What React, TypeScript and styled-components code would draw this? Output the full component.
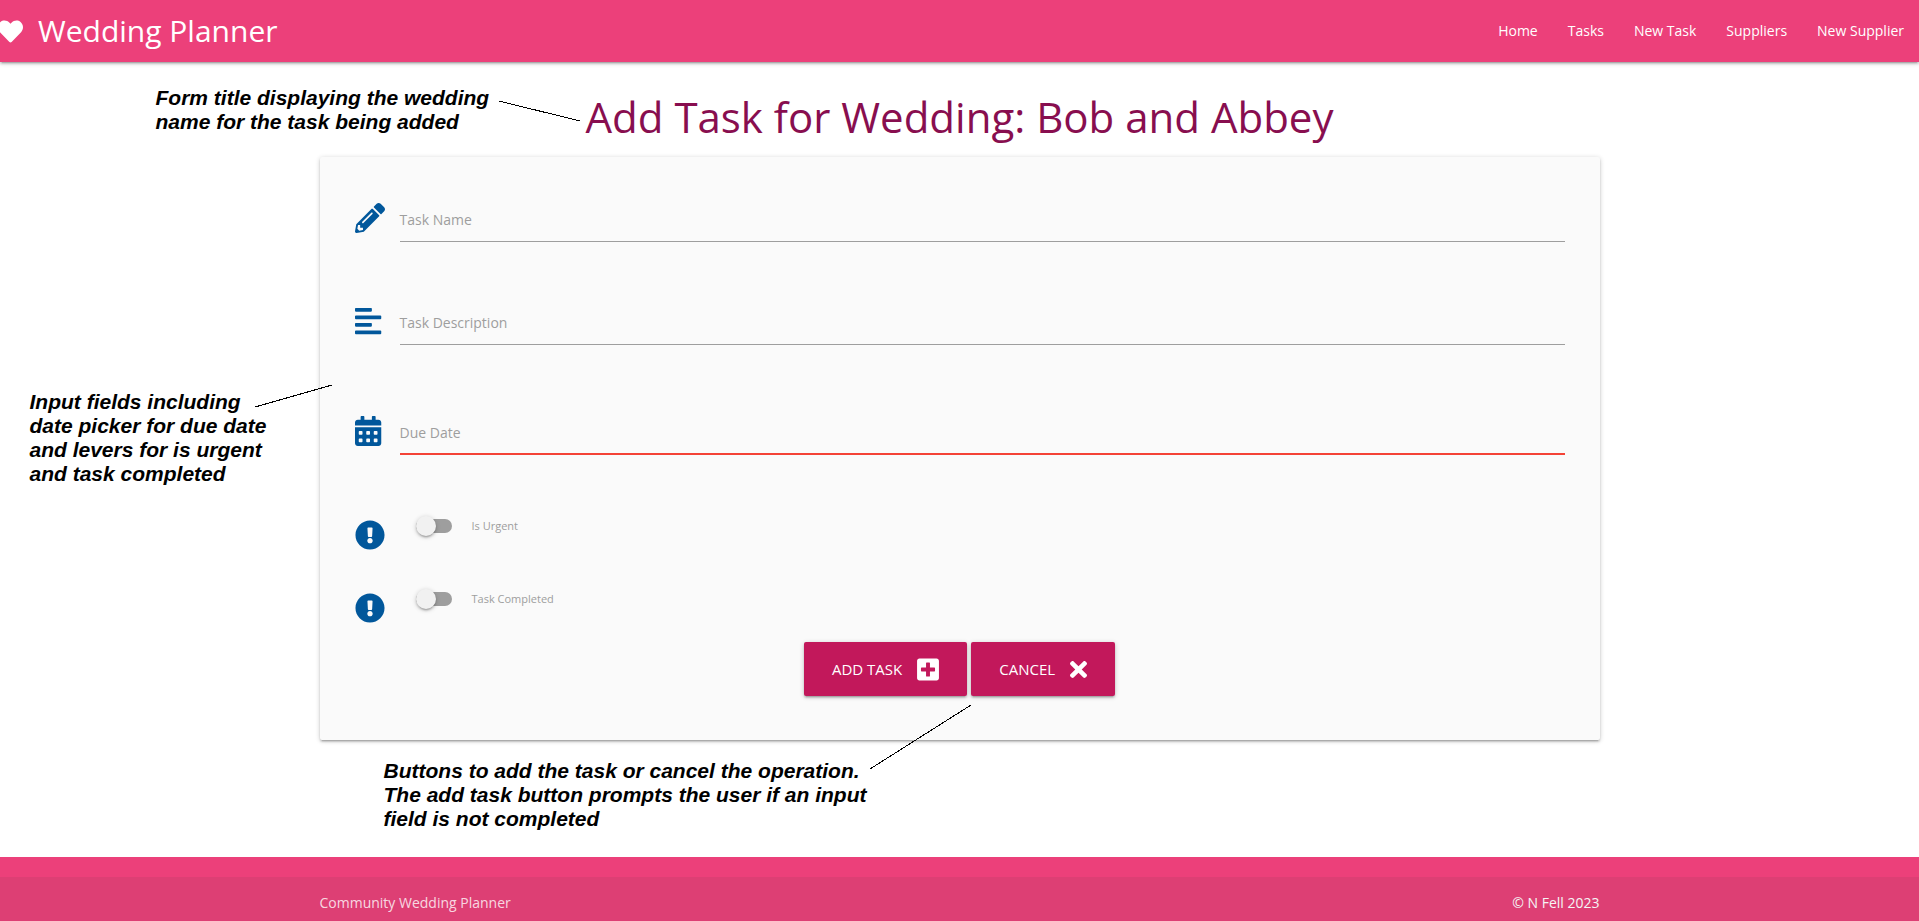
import React from "react";
import styled, { createGlobalStyle, css } from "styled-components";
import {
  FaAlignLeft,
  FaCalendarAlt,
  FaExclamationCircle,
  FaHeart,
  FaPencilAlt,
  FaPlusSquare,
  FaTimes,
} from "react-icons/fa";

const color = {
  pink: "#ec407a",
  pinkDark: "#c2185b",
  wine: "#880e4f",
  blue: "#01579b",
  grey: "#9e9e9e",
  red: "#f44336",
  panel: "#fafafa",
};

const depth = css`
  box-shadow: 0 2px 2px 0 rgba(0, 0, 0, 0.14), 0 3px 1px -2px rgba(0, 0, 0, 0.12),
    0 1px 5px 0 rgba(0, 0, 0, 0.2);
`;

const GlobalStyle = createGlobalStyle`
  *, *::before, *::after { box-sizing: border-box; }
  body {
    margin: 0;
    background: #fff;
    font-family: "Open Sans", "Noto Sans", sans-serif;
    font-size: 14px;
    line-height: 20px;
    overflow-x: hidden;
  }
`;

const Page = styled.div`
  display: flex;
  flex-direction: column;
  min-height: 100vh;
`;

const NavBar = styled.nav`
  display: flex;
  justify-content: space-between;
  height: 62px;
  background: ${color.pink};
  ${depth}
`;

const Brand = styled.a`
  display: flex;
  align-items: center;
  gap: 15px;
  margin-left: -2px;
  color: #fff;
  font-size: 30px;
  line-height: 62px;
  text-decoration: none;
  white-space: nowrap;

  svg {
    font-size: 25px;
  }
`;

const Menu = styled.ul`
  display: flex;
  margin: 0;
  padding: 0;
  list-style: none;
`;

const MenuLink = styled.a`
  display: block;
  padding: 0 15px;
  color: #fff;
  line-height: 61px;
  text-decoration: none;
  white-space: nowrap;
`;

const Container = styled.div`
  position: relative;
  display: flow-root;
  width: 70%;
  max-width: 1280px;
  margin: 0 auto;
`;

const Main = styled.main`
  flex: 1;
`;

const Title = styled.h1`
  margin: 27px 0 12px;
  color: ${color.wine};
  font-size: 42px;
  font-weight: 400;
  line-height: 56px;
  text-align: center;
`;

const Card = styled.form`
  padding: 40px 35px 44px;
  border-radius: 2px;
  background: ${color.panel};
  ${depth}
`;

const Row = styled.div<{ $space: number }>`
  display: flex;
  align-items: flex-start;
  margin-bottom: ${(p) => p.$space}px;
`;

const Prefix = styled.span<{ $top: number }>`
  display: flex;
  flex: 0 0 45px;
  padding-top: ${(p) => p.$top}px;
  color: ${color.blue};
  font-size: 30px;
`;

const Field = styled.div`
  position: relative;
  flex: 1;
  height: 45px;
`;

const fieldBox = css<{ $invalid?: boolean }>`
  display: block;
  width: 100%;
  height: 45px;
  padding: 12px 0 0;
  border: 0;
  border-bottom: ${(p) => (p.$invalid ? `2px solid ${color.red}` : `1px solid ${color.grey}`)};
  border-radius: 0;
  outline: 0;
  background: transparent;
  font: inherit;
  resize: none;
  overflow: hidden;
`;

const TextInput = styled.input`
  ${fieldBox}
`;

const TextArea = styled.textarea`
  ${fieldBox}
`;

const FieldLabel = styled.label`
  position: absolute;
  top: 13px;
  left: 0;
  color: ${color.grey};
  pointer-events: none;

  ${Field} :focus + &,
  ${Field} :not(:placeholder-shown) + & {
    top: -10px;
    font-size: 11px;
  }
`;

const SwitchLabel = styled.label`
  display: flex;
  align-items: center;
  gap: 20px;
  height: 20px;
  margin-left: 16px;
  color: ${color.grey};
  font-size: 11px;
  cursor: pointer;
`;

const Switch = styled.input`
  appearance: none;
  display: flex;
  align-items: center;
  width: 36px;
  height: 14px;
  margin: 0;
  border-radius: 7px;
  background: ${color.grey};
  cursor: pointer;

  &::before {
    content: "";
    flex: 0 0 20px;
    height: 20px;
    border-radius: 50%;
    background: #f1f1f1;
    ${depth}
  }

  &:checked {
    justify-content: flex-end;
    background: #84c7c1;
  }
`;

const Actions = styled.div`
  display: flex;
  justify-content: center;
  gap: 4px;
`;

const Button = styled.button`
  display: flex;
  align-items: center;
  gap: 15px;
  height: 54px;
  padding: 0 28px;
  border: 0;
  border-radius: 2px;
  background: ${color.pinkDark};
  color: #fff;
  font: inherit;
  font-size: 15px;
  text-transform: uppercase;
  white-space: nowrap;
  cursor: pointer;
  ${depth}
`;

const ButtonIcon = styled.span<{ $width: number }>`
  display: flex;
  width: ${(p) => p.$width}px;

  svg {
    width: 100%;
    height: 25px;
  }
`;

const Note = styled.p<{ $left: number; $top: number }>`
  position: absolute;
  top: ${(p) => p.$top}px;
  left: ${(p) => p.$left}px;
  margin: 0;
  color: #000;
  font: italic bold 21px/24px "Liberation Sans", Arial, sans-serif;
  white-space: nowrap;
`;

const Pointers = styled.svg`
  position: absolute;
  top: 0;
  left: 0;
  width: 1px;
  height: 1px;
  overflow: visible;
  pointer-events: none;
  stroke: #000;
  stroke-width: 1;
  shape-rendering: crispEdges;
`;

const Footer = styled.footer`
  padding-top: 20px;
  background: ${color.pink};
`;

const FooterBar = styled.div`
  padding: 16px 0 8px;
  background: rgba(51, 51, 51, 0.08);
`;

const FooterRow = styled(Container)`
  display: flex;
  justify-content: space-between;
  color: rgba(255, 255, 255, 0.8);
`;

const FooterLink = styled.a`
  color: #f5f5f5;
  text-decoration: none;
`;

const menu = ["Home", "Tasks", "New Task", "Suppliers", "New Supplier"];

const notes = [
  { left: -164, top: 24, lines: ["Form title displaying the wedding", "name for the task being added"] },
  {
    left: -290,
    top: 328,
    lines: [
      "Input fields including",
      "date picker for due date",
      "and levers for is urgent",
      "and task completed",
    ],
  },
  {
    left: 64,
    top: 697,
    lines: [
      "Buttons to add the task or cancel the operation.",
      "The add task button prompts the user if an input",
      "field is not completed",
    ],
  },
];

export default function App() {
  return (
    <Page>
      <GlobalStyle />
      <NavBar>
        <Brand href="#">
          <FaHeart />
          <span>Wedding Planner</span>
        </Brand>
        <Menu>
          {menu.map((item) => (
            <li key={item}>
              <MenuLink href="#">{item}</MenuLink>
            </li>
          ))}
        </Menu>
      </NavBar>

      <Main>
        <Container>
          <Title>Add Task for Wedding: Bob and Abbey</Title>
          <Card onSubmit={(e: React.FormEvent) => e.preventDefault()}>
            <Row $space={58}>
              <Prefix $top={6}>
                <FaPencilAlt />
              </Prefix>
              <Field>
                <TextInput id="task_name" type="text" placeholder=" " />
                <FieldLabel htmlFor="task_name">Task Name</FieldLabel>
              </Field>
            </Row>
            <Row $space={65}>
              <Prefix $top={6}>
                <FaAlignLeft preserveAspectRatio="xMinYMid" />
              </Prefix>
              <Field>
                <TextArea id="task_description" placeholder=" " />
                <FieldLabel htmlFor="task_description">Task Description</FieldLabel>
              </Field>
            </Row>
            <Row $space={61}>
              <Prefix $top={6}>
                <FaCalendarAlt preserveAspectRatio="xMinYMid" />
              </Prefix>
              <Field>
                <TextInput id="due_date" type="text" placeholder=" " $invalid />
                <FieldLabel htmlFor="due_date">Due Date</FieldLabel>
              </Field>
            </Row>
            <Row $space={39}>
              <Prefix $top={4}>
                <FaExclamationCircle />
              </Prefix>
              <SwitchLabel>
                <Switch type="checkbox" name="is_urgent" />
                Is Urgent
              </SwitchLabel>
            </Row>
            <Row $space={19}>
              <Prefix $top={4}>
                <FaExclamationCircle />
              </Prefix>
              <SwitchLabel>
                <Switch type="checkbox" name="is_complete" />
                Task Completed
              </SwitchLabel>
            </Row>
            <Actions>
              <Button type="submit">
                Add Task
                <ButtonIcon $width={22}>
                  <FaPlusSquare />
                </ButtonIcon>
              </Button>
              <Button type="button">
                Cancel
                <ButtonIcon $width={17}>
                  <FaTimes />
                </ButtonIcon>
              </Button>
            </Actions>
          </Card>

          {notes.map((note) => (
            <Note key={note.lines[0]} $left={note.left} $top={note.top}>
              {note.lines.map((line, i) => (
                <React.Fragment key={line}>
                  {i > 0 && <br />}
                  {line}
                </React.Fragment>
              ))}
            </Note>
          ))}
          <Pointers aria-hidden="true">
            <line x1="179" y1="39" x2="260" y2="59" />
            <line x1="-65" y1="345" x2="12" y2="323" />
            <line x1="550" y1="707" x2="651" y2="643" />
          </Pointers>
        </Container>
      </Main>

      <Footer>
        <FooterBar>
          <FooterRow>
            <span>Community Wedding Planner</span>
            <FooterLink href="#">© N Fell 2023</FooterLink>
          </FooterRow>
        </FooterBar>
      </Footer>
    </Page>
  );
}
